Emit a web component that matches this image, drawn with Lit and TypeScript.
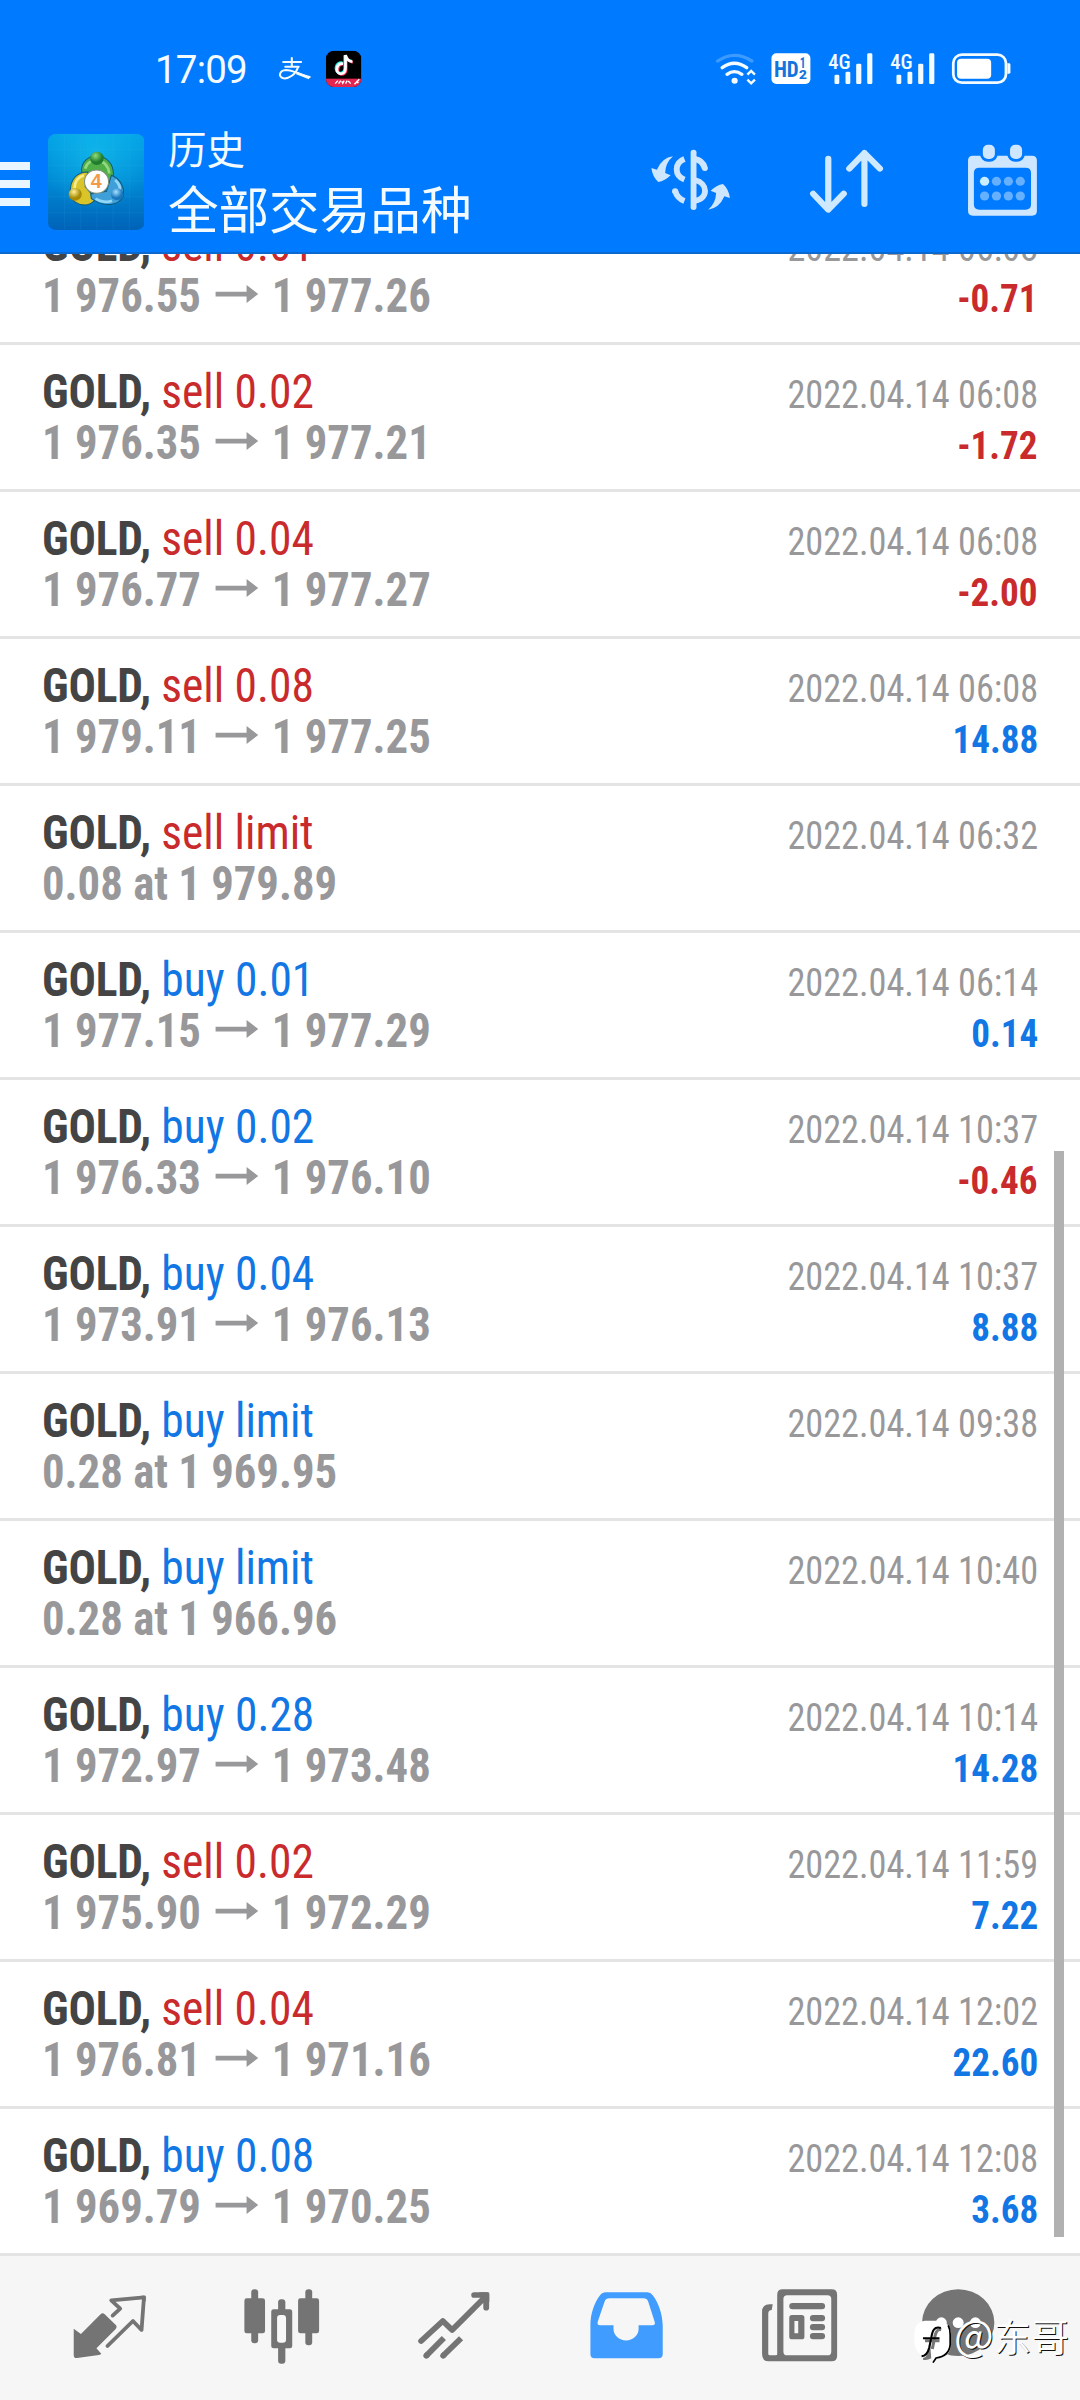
import { LitElement, html, css, svg, nothing } from "lit";
import { customElement, property } from "lit/decorators.js";

interface Deal {
  side: "buy" | "sell";
  label: string;
  from: string;
  to?: string;
  time: string;
  profit?: string;
}

const deals: Deal[] = [
  { side: "sell", label: "0.01", from: "1 976.55", to: "1 977.26", time: "2022.04.14 06:08", profit: "-0.71" },
  { side: "sell", label: "0.02", from: "1 976.35", to: "1 977.21", time: "2022.04.14 06:08", profit: "-1.72" },
  { side: "sell", label: "0.04", from: "1 976.77", to: "1 977.27", time: "2022.04.14 06:08", profit: "-2.00" },
  { side: "sell", label: "0.08", from: "1 979.11", to: "1 977.25", time: "2022.04.14 06:08", profit: "14.88" },
  { side: "sell", label: "limit", from: "0.08 at 1 979.89", time: "2022.04.14 06:32" },
  { side: "buy", label: "0.01", from: "1 977.15", to: "1 977.29", time: "2022.04.14 06:14", profit: "0.14" },
  { side: "buy", label: "0.02", from: "1 976.33", to: "1 976.10", time: "2022.04.14 10:37", profit: "-0.46" },
  { side: "buy", label: "0.04", from: "1 973.91", to: "1 976.13", time: "2022.04.14 10:37", profit: "8.88" },
  { side: "buy", label: "limit", from: "0.28 at 1 969.95", time: "2022.04.14 09:38" },
  { side: "buy", label: "limit", from: "0.28 at 1 966.96", time: "2022.04.14 10:40" },
  { side: "buy", label: "0.28", from: "1 972.97", to: "1 973.48", time: "2022.04.14 10:14", profit: "14.28" },
  { side: "sell", label: "0.02", from: "1 975.90", to: "1 972.29", time: "2022.04.14 11:59", profit: "7.22" },
  { side: "sell", label: "0.04", from: "1 976.81", to: "1 971.16", time: "2022.04.14 12:02", profit: "22.60" },
  { side: "buy", label: "0.08", from: "1 969.79", to: "1 970.25", time: "2022.04.14 12:08", profit: "3.68" },
];

// drawing units per pixel in the icon artwork, horizontally and vertically
const UX = 2.904;
const UY = 3;
const icon = (x: number, y: number, w: number, h: number, body: unknown) =>
  html`<svg viewBox="${x} ${y} ${w} ${h}" width=${w / UX} height=${h / UY} preserveAspectRatio="none">${body}</svg>`;

@customElement("status-bar")
class StatusBar extends LitElement {
  static styles = css`
    :host { display: flex; align-items: flex-start; height: 90px; padding: 48.3px 67px 0 155px; box-sizing: border-box; color: #f4fbff; }
    svg { display: block; flex: none; }
    .time { width: 122px; font: 400 38.5px/43px Roboto, sans-serif; letter-spacing: -0.8px; }
    .space { flex: 1; }
    text { font-family: "Roboto Condensed", Roboto, sans-serif; font-stretch: 75%; }
  `;

  private signal(dx: number) {
    return svg`<g transform="translate(${dx} 0)" fill="#f4fbff">
      <text x="839" y="117" font-size="62" font-weight="500" textLength="65" lengthAdjust="spacingAndGlyphs">4G</text>
      <rect x="857" y="135" width="14" height="28" rx="4"/><rect x="889" y="126" width="14" height="37" rx="4"/>
      <rect x="920" y="102" width="15" height="61" rx="4"/><rect x="952" y="71" width="15" height="92" rx="4"/></g>`;
  }

  render() {
    return html`
      <span class="time">17:09</span>
      ${icon(805, 55, 250, 122, svg`
        <g fill="none" stroke="#f4fbff" stroke-linecap="round">
          <path stroke-width="6" d="M823 97H875M848 85V110M829 111H868"/>
          <path stroke-width="6" d="M866 112C860 135 838 148 824 146C807 142 812 122 831 121C850 121 872 135 900 142"/>
          <path stroke-width="8" d="M862 130L899 145" stroke-linecap="butt"/>
        </g>
        <clipPath id="tile"><rect x="947" y="63" width="103" height="109" rx="24"/></clipPath>
        <g clip-path="url(#tile)">
          <rect x="947" y="63" width="103" height="109" fill="#000"/>
          <rect x="947" y="147" width="103" height="25" fill="#e32650"/>
          <path d="M974 162l8-9M984 162l6-9M993 155l3 6 4-8M1004 162l5-9M1012 154l7 8M1030 164l14-15M1037 153l4 8" stroke="#fff" stroke-width="4" fill="none"/>
          <g fill="none" stroke-width="8">
            <path d="M995 99C973 98 971 127 986 130C998 132 1002 123 1002 114V77C1005 87 1011 93 1022 94" stroke="#25f4ee"/>
            <path d="M999 104C980 101 977 130 990 134C1002 136 1007 126 1006 117V80C1009 89 1015 96 1025 98" stroke="#fe2c55"/>
            <path d="M997 102C976 100 974 129 988 132C1000 134 1004 124 1004 115V76C1007 88 1013 95 1024 96" stroke="#fff"/>
          </g>
        </g>`)}
      <span class="space"></span>
      ${icon(510, 55, 865, 122, svg`
        <g fill="none" stroke="#f4fbff" stroke-linecap="round" stroke-width="10">
          <path d="M518 94Q566 60 617 94" stroke="#3d9bff"/>
          <path d="M531 114Q566 88 602 114M545 134Q566 118 588 134"/>
        </g>
        <circle cx="567" cy="153" r="9" fill="#f4fbff"/>
        <path d="M604 135l11-11 11 11M604 150l11 11 11-11" fill="none" stroke="#f4fbff" stroke-width="7"/>
        <rect x="674" y="71" width="113" height="92" rx="14" fill="#fff"/>
        <g fill="#1274dc" font-weight="700">
          <text x="681" y="141" font-size="67" textLength="72" lengthAdjust="spacingAndGlyphs">HD</text>
          <text x="756" y="115" font-size="42" textLength="17" lengthAdjust="spacingAndGlyphs">1</text>
          <text x="753" y="147" font-size="39" textLength="24" lengthAdjust="spacingAndGlyphs">2</text>
        </g>
        ${this.signal(0)}${this.signal(180)}
        <rect x="1202" y="75" width="153" height="84" rx="25" fill="none" stroke="#f4fbff" stroke-width="8"/>
        <rect x="1213" y="87" width="99" height="60" rx="12" fill="#fff"/>
        <path d="M1359 101h5a4 4 0 0 1 4 4v23a4 4 0 0 1-4 4h-5z" fill="#f4fbff"/>`)}
    `;
  }
}

@customElement("title-bar")
class TitleBar extends LitElement {
  static styles = css`
    :host { display: flex; align-items: flex-start; height: 164px; box-sizing: border-box; padding: 28px 42px 0 0; color: #f4fbff; border-bottom: 2px solid #0a68cf; }
    svg { display: block; flex: none; }
    .menu { padding-top: 44px; width: 30px; display: flex; flex-direction: column; gap: 10px; }
    .bar { height: 8px; background: #e9f6ff; }
    .logo { margin: 16px 0 0 17.5px; }
    .titles { margin-left: 24px; flex: 1; font-family: "Noto Sans CJK SC", sans-serif; font-weight: 400; white-space: nowrap; }
    .small { font-size: 38.5px; line-height: 58px; height: 58px; }
    .big { font-size: 50.6px; line-height: 63px; }
    .actions { display: flex; padding-top: 25.3px; }
    .second { margin-left: 78px; }
    .third { margin-left: 82.6px; }
    .badge { font-family: "Liberation Sans", sans-serif; font-weight: 700; }
  `;

  render() {
    const dots = [0, 1, 2, 3].flatMap((c) => [0, 1].map((r) => svg`
      <circle cx=${1291 + c * 34.6} cy=${455 + r * 44} r="13.5" fill=${c + r === 0 ? "#c9efff" : "#65b0ff"}/>`));
    return html`
      <div class="menu"><div class="bar"></div><div class="bar"></div><div class="bar"></div></div>
      <div class="logo">${icon(138, 312, 280, 288, svg`
        <defs>
          <linearGradient id="sky" x2="0" y2="1"><stop offset="0" stop-color="#02a2e6"/><stop offset=".5" stop-color="#0088d4"/><stop offset="1" stop-color="#0063b8"/></linearGradient>
          <radialGradient id="glow" cy=".2" r=".6"><stop offset="0" stop-color="#18c4ef" stop-opacity=".6"/><stop offset="1" stop-color="#18c4ef" stop-opacity="0"/></radialGradient>
          <radialGradient id="gr" cx=".4" cy=".3"><stop offset="0" stop-color="#8fdc7c"/><stop offset="1" stop-color="#1e7d2c"/></radialGradient>
          <radialGradient id="ye" cx=".4" cy=".3"><stop offset="0" stop-color="#fff29a"/><stop offset="1" stop-color="#a88a05"/></radialGradient>
          <radialGradient id="bl" cx=".4" cy=".3"><stop offset="0" stop-color="#a5e2ff"/><stop offset="1" stop-color="#1877bd"/></radialGradient>
        </defs>
        <rect x="138" y="312" width="280" height="288" rx="22" fill="url(#sky)"/>
        <rect x="138" y="312" width="280" height="288" rx="22" fill="url(#glow)"/>
        <path d="M186 312V600M233 312V600M280 312V600M327 312V600M374 312V600M138 359H418M138 406H418M138 453H418M138 500H418M138 547H418" stroke="#6cc8f5" stroke-opacity=".12" stroke-width="2"/>
        <g stroke="#0d5a80" stroke-width="3">
          <path d="M236 428C232 395 256 378 280 378C306 378 328 400 328 432Q326 456 312 466L250 436Z" fill="#4fae45"/>
          <path d="M254 426C222 426 202 448 203 485C202 512 226 528 252 524Q268 520 276 506L246 470Z" fill="#d9c42a"/>
          <path d="M322 436C348 446 362 474 356 500C344 524 306 536 264 506L262 492L308 484Z" fill="#3f9fd8"/>
        </g>
        <g fill="none" stroke-width="8" opacity=".8">
          <path d="M246 416C250 398 266 389 282 391C302 394 314 410 316 430" stroke="#a6e391"/>
          <path d="M242 436C224 442 216 458 215 474" stroke="#fff6a1"/>
          <path d="M333 450C344 460 348 470 346 480M276 506C290 516 310 518 324 512" stroke="#a9e5ff"/>
        </g>
        <circle cx="280" cy="385" r="20" fill="url(#gr)"/>
        <circle cx="217" cy="493" r="19" fill="url(#ye)"/>
        <circle cx="339" cy="493" r="18" fill="url(#bl)"/>
        <circle cx="279" cy="455" r="35" fill="#fff" stroke="#7f907f" stroke-width="3"/>
        <text class="badge" x="262" y="475" font-size="60" fill="#f39a48" textLength="32" lengthAdjust="spacingAndGlyphs">4</text>`)}</div>
      <div class="titles"><div class="small">历史</div><div class="big">全部交易品种</div></div>
      <div class="actions">
        ${icon(318, 340, 235, 222, svg`
          <rect x="436" y="360" width="17" height="181" rx="8" fill="#cfe6ff"/>
          <path d="M448 388Q470 391 477 415" fill="none" stroke="#cfe6ff" stroke-width="18" stroke-linecap="round"/>
          <path d="M450 452C485 460 489 506 450 513" fill="none" stroke="#cfe6ff" stroke-width="17"/>
          <path d="M418 388C388 400 388 438 418 450" fill="none" stroke="#cfe6ff" stroke-width="17"/>
          <path d="M391 484Q397 506 418 514" fill="none" stroke="#cfe6ff" stroke-width="17"/><circle cx="391" cy="485" r="9" fill="#cfe6ff"/>
          <path d="M385 380Q353 384 338 420L322 415Q325 441 342 457Q361 454 378 437L362 430Q363 399 385 380Z" fill="#cfe6ff"/>
          <path transform="rotate(180 436 460)" d="M385 380Q353 384 338 420L322 415Q325 441 342 457Q361 454 378 437L362 430Q363 399 385 380Z" fill="#cfe6ff"/>`)}
        <div class="second">${icon(780, 340, 220, 222, svg`
          <g fill="none" stroke="#cfe9ff" stroke-width="18" stroke-linecap="round" stroke-linejoin="round">
            <path d="M836 387V538M792 492L836 540L881 492M941 523V370M897 417L941 370L986 417"/></g>`)}</div>
        <div class="third">${icon(1240, 340, 206, 222, svg`
          <path fill-rule="evenodd" fill="#cfe6ff" d="M1257 378H1429Q1443 378 1443 392V544Q1443 558 1429 558H1257Q1243 558 1243 544V392Q1243 378 1257 378ZM1276 414Q1260 414 1260 430V524Q1260 540 1276 540H1410Q1426 540 1426 524V430Q1426 414 1410 414Z"/>
          <g fill="#cfe6ff" stroke="#007aff" stroke-width="8"><rect x="1282" y="341" width="43" height="51" rx="19"/><rect x="1361" y="341" width="43" height="51" rx="19"/></g>
          ${dots}`)}</div>
      </div>`;
  }
}

@customElement("deal-row")
class DealRow extends LitElement {
  @property({ attribute: false }) deal!: Deal;

  static styles = css`
    :host { display: block; box-sizing: border-box; height: 147px; padding: 21px 42px 0 42px; border-bottom: 3px solid #e4e4e5; font-family: "Roboto Condensed", Roboto, sans-serif; font-stretch: 75%; background: #fff; }
    .line { display: flex; justify-content: space-between; align-items: baseline; height: 51px; line-height: 51px; font-size: 48px; white-space: pre; }
    .title { transform: scaleX(0.947); transform-origin: 0 0; }
    .symbol { font-weight: 700; color: #444; letter-spacing: -0.2px; }
    .sell { color: #c92a2c; }
    .buy { color: #1277e4; }
    .prices { font-weight: 700; color: #98989b; transform: scaleX(0.932); transform-origin: 0 0; }
    .arrow { margin: 0 15px; vertical-align: 8.7px; }
    .time { font-size: 39.5px; color: #98989a; transform: scaleX(0.918); transform-origin: 100% 0; }
    .profit { font-size: 39.5px; font-weight: 700; transform: scaleX(0.94); transform-origin: 100% 0; }
  `;

  render() {
    const d = this.deal;
    const tone = d.profit?.startsWith("-") ? "sell" : "buy";
    return html`
      <div class="line">
        <span class="title"><span class="symbol">GOLD, </span><span class=${d.side}>${d.side} ${d.label}</span></span>
        <span class="time">${d.time}</span>
      </div>
      <div class="line">
        <span class="prices">${d.from}${d.to
          ? html`<svg class="arrow" width="46" height="18" viewBox="0 0 46 18"><path d="M0 6.7H33.5V0L46 9L33.5 18V11.6H0Z" fill="#98989b"/></svg>${d.to}`
          : nothing}</span>
        ${d.profit ? html`<span class="profit ${tone}">${d.profit}</span>` : nothing}
      </div>`;
  }
}

@customElement("tab-bar")
class TabBar extends LitElement {
  static styles = css`
    :host { position: relative; display: flex; height: 144px; box-sizing: border-box; padding: 30.7px 0 0 24px; background: #f6f6f6; }
    .tab { width: 172px; display: flex; justify-content: center; }
    .tab:nth-child(5) { width: 176px; }
    .tab.last { width: 140px; }
    svg { display: block; }
    .mark { position: absolute; left: 913px; top: 60.5px; display: flex; align-items: flex-start; }
    .handle { font: 350 37.5px/50px "Noto Sans CJK SC", sans-serif; color: #fff; margin-left: 1.5px; margin-top: -9px; letter-spacing: 0.2px; text-shadow: 1px 1px 0 #111; white-space: nowrap; }
    .at { font-size: 42px; font-weight: 400; letter-spacing: 0; }
  `;

  render() {
    const g = "#747474";
    return html`
      <div class="tab">${icon(210, 170, 220, 235, svg`
        <path d="M328 256L350 235L324 210L419 201L412 299L387 272L313 347" fill="none" stroke=${g} stroke-width="11" stroke-linejoin="round" stroke-linecap="round"/>
        <path d="M412 196H424V215Z" fill=${g}/>
        <path d="M215 295L236 311L293 252Q299 246 305 252L338 285Q342 290 337 296L281 354L295 370Q294 373 288 374L225 383Q215 385 215 374Z" fill=${g}/>`)}</div>
      <div class="tab">${icon(705, 170, 225, 235, svg`
        <g fill=${g}><rect x="729" y="177" width="20" height="162" rx="9"/><rect x="709" y="204" width="60" height="105" rx="7"/>
        <rect x="886" y="177" width="20" height="168" rx="9"/><rect x="865" y="204" width="61" height="105" rx="7"/>
        <rect x="807" y="207" width="21" height="193" rx="9"/><rect x="787" y="237" width="61" height="117" rx="7"/></g>
        <rect x="804" y="254" width="26" height="83" rx="9" fill="#f8f8f8"/>`)}</div>
      <div class="tab">${icon(1210, 170, 215, 235, svg`
        <g fill="none" stroke=${g} stroke-width="17" stroke-linejoin="round">
          <path stroke-linecap="round" d="M1222 332L1285 272L1312 299L1405 203M1376 194H1411V232"/>
          <path d="M1288 323L1236 377M1338 324L1285 377"/><path stroke-linecap="round" d="M1237 376L1239 374M1286 376L1288 374"/></g>
        <path d="M1390 186H1416Q1420 186 1420 190V215Z" fill=${g}/>`)}</div>
      <div class="tab">${icon(140, 170, 222, 235, svg`
        <path fill-rule="evenodd" fill="#419cff" d="M192 186H312Q322 186 328 195C344 216 356 250 357 285V371Q357 384 344 384H159Q147 384 147 371V285C147 250 159 216 175 195Q181 186 192 186ZM202 204Q192 204 188 214L168 275Q166 285 175 285H214V295A36 35 0 0 0 287 295V285H327Q336 285 334 276L315 214Q311 204 301 204Z"/>`)}</div>
      <div class="tab">${icon(640, 170, 230, 235, svg`
        <g fill=${g}><path fill-rule="evenodd" d="M706 177H848Q864 177 864 193V377Q864 393 848 393H666Q646 393 646 371V244Q646 223 668 222H677L674 239Q664 239 664 250V371Q664 375 669 375H686Q690 375 690 370V193Q690 177 706 177ZM719 195Q708 195 708 206V364Q708 375 719 375H836Q847 375 847 364V206Q847 195 836 195Z"/>
        <rect x="725" y="218" width="104" height="19" rx="9"/>
        <path fill-rule="evenodd" d="M733 254H761Q769 254 769 262V319Q769 327 761 327H733Q725 327 725 319V262Q725 254 733 254ZM740 272V309H751V272Z"/>
        <rect x="785" y="254" width="44" height="19" rx="9"/><rect x="785" y="281" width="44" height="19" rx="9"/><rect x="785" y="308" width="44" height="19" rx="9"/></g>`)}</div>
      <div class="tab last">${icon(1105, 170, 215, 235, svg`
        <ellipse cx="1213" cy="277" rx="105" ry="100" fill=${g}/>
        <g fill="#fff"><circle cx="1164" cy="277" r="16"/><circle cx="1213" cy="277" r="16"/><circle cx="1263" cy="277" r="16"/></g>`)}</div>
      <div class="mark">
        ${icon(1083, 262, 115, 145, svg`
          <path d="M1117 273H1150Q1193 273 1193 315V345C1193 370 1178 384 1150 388L1142 400L1140 386C1105 385 1087 362 1087 335V308Q1090 275 1117 273Z" fill="#fff"/>
          <path d="M1112 385C1120 383 1124 378 1127 360L1133 345L1136 386Q1122 394 1112 390Z" fill="#777"/>
          <path d="M1185 287Q1191 298 1191 315V345C1189 370 1172 382 1150 385L1141 399" fill="none" stroke="#000" stroke-width="5"/>
          <path d="M1165 300C1152 297 1148 310 1145 328L1139 358M1118 333H1160" fill="none" stroke="#777" stroke-width="9"/>
          <path d="M1164 295C1144 289 1139 304 1136 325L1130 354Q1124 378 1108 380M1112 326H1160" fill="none" stroke="#000" stroke-width="6"/>`)}
        <span class="handle"><span class="at">@</span>东哥</span>
      </div>`;
  }
}

@customElement("app-root")
class AppRoot extends LitElement {
  static styles = css`
    :host { display: flex; flex-direction: column; width: 1080px; height: 2400px; overflow: hidden; background: #fff; }
    .top { background: #007aff; flex: none; }
    .list { position: relative; height: 2002px; overflow: hidden; flex: none; }
    .rows { margin-top: -56px; }
    .thumb { position: absolute; left: 1054px; top: 897px; width: 10px; height: 1086px; background: #b1b1b1; }
    tab-bar { flex: 1; }
  `;

  render() {
    return html`
      <div class="top"><status-bar></status-bar><title-bar></title-bar></div>
      <div class="list">
        <div class="rows">${deals.map((d) => html`<deal-row .deal=${d}></deal-row>`)}</div>
        <div class="thumb"></div>
      </div>
      <tab-bar></tab-bar>`;
  }
}
